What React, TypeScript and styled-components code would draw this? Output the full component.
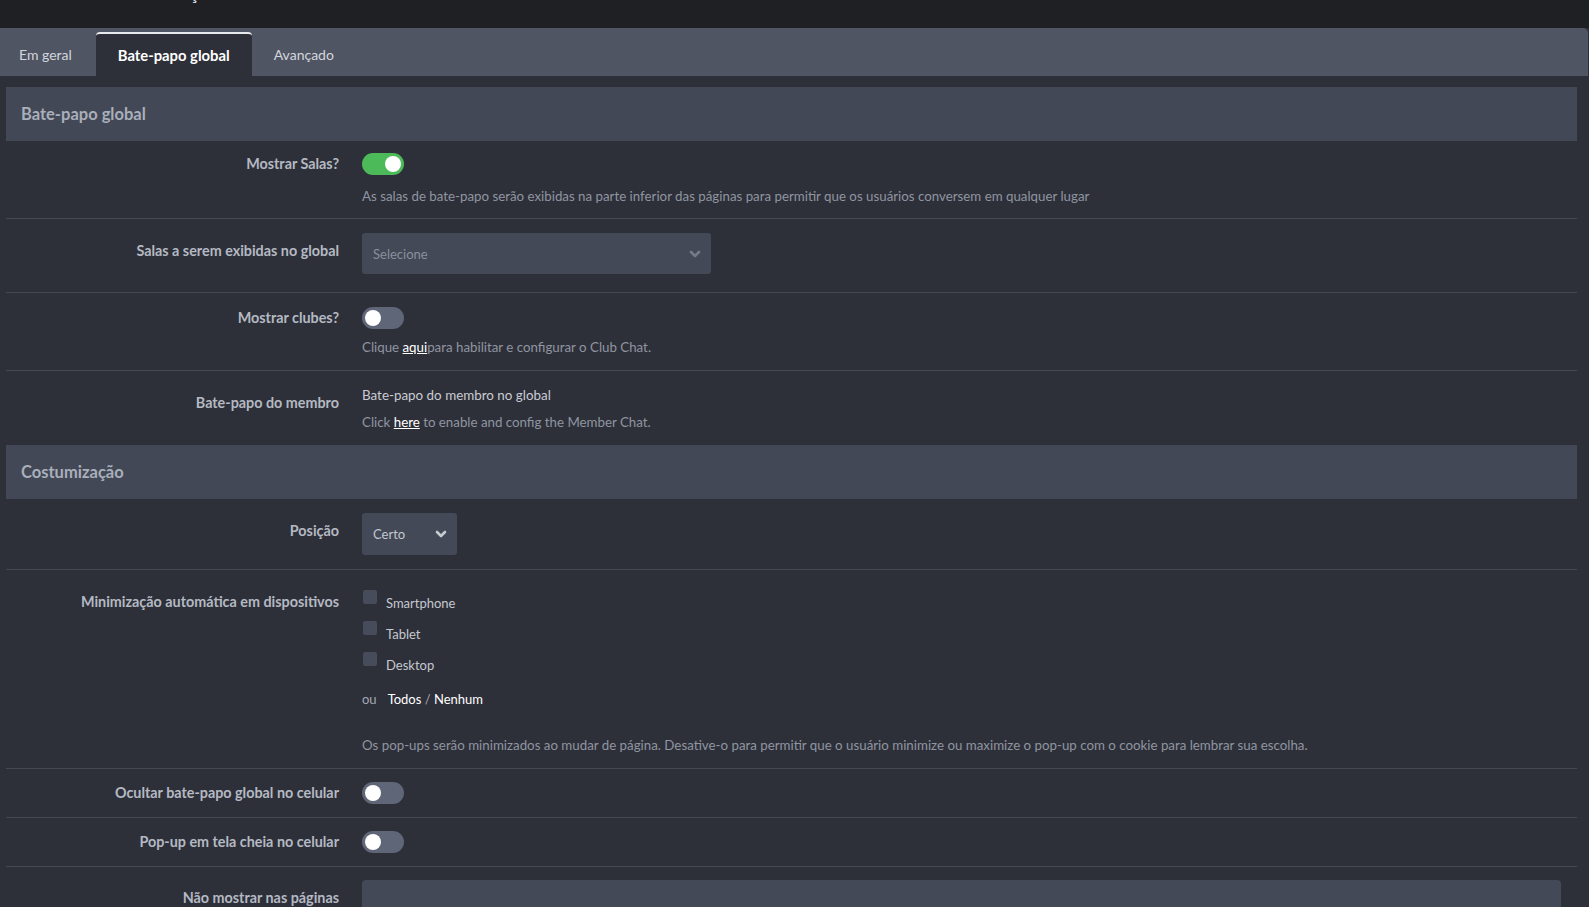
import React, { useState } from 'react';
import styled, { createGlobalStyle } from 'styled-components';

const GlobalStyle = createGlobalStyle`
  html, body {
    margin: 0;
    padding: 0;
    background: #2e3039;
  }
  body {
    font-family: Lato, "Noto Sans", "Liberation Sans", sans-serif;
    color: #c4c8d0;
    overflow: hidden;
  }
  * { box-sizing: border-box; }
`;

const Page = styled.div`
  min-height: 907px;
  background: #2e3039;
`;

const TopBar = styled.div`
  height: 28px;
  background: #1f2024;
  padding-left: 136px;
  overflow: hidden;
`;

const TopTitle = styled.h1`
  margin: -18px 0 0 0;
  font-size: 20px;
  line-height: 20px;
  font-weight: 400;
  color: #d9dce2;
`;

const TabBar = styled.div`
  height: 48px;
  width: calc(100% - 1px);
  background: #4f5563;
  border-radius: 0 5px 0 0;
  display: flex;
  align-items: flex-end;
`;

const Tab = styled.button<{ $active?: boolean }>`
  height: 44px;
  padding: 0 22px 1px;
  border: none;
  border-top: 2px solid ${({ $active }) => ($active ? '#e8e9ec' : 'transparent')};
  border-radius: ${({ $active }) => ($active ? '4px 4px 0 0' : '0')};
  background: ${({ $active }) => ($active ? '#2e3039' : 'transparent')};
  color: ${({ $active }) => ($active ? '#ffffff' : '#d3d6dc')};
  font-family: inherit;
  font-size: ${({ $active }) => ($active ? '14.8px' : '14px')};
  font-weight: ${({ $active }) => ($active ? 700 : 400)};
  cursor: pointer;

  &:first-child {
    padding: 0 24px 1px 19px;
  }
`;

const Content = styled.div`
  padding: 11px 12px 0 6px;
`;

const SectionHeader = styled.div`
  height: 54px;
  background: #424855;
  display: flex;
  align-items: center;
  padding-left: 15px;
  font-size: 16.5px;
  font-weight: 700;
  color: #a9afbb;
`;

const Row = styled.div<{ $pt?: number; $pb?: number; $last?: boolean }>`
  display: grid;
  grid-template-columns: 356px 1fr;
  padding: ${({ $pt = 14 }) => $pt}px 16px ${({ $pb = 13 }) => $pb}px 0;
  border-bottom: ${({ $last }) => ($last ? 'none' : '1px solid #434854')};
`;

const Label = styled.div<{ $pt?: number }>`
  text-align: right;
  padding: ${({ $pt = 8 }) => $pt}px 23px 0 0;
  font-size: 14.35px;
  line-height: 20px;
  font-weight: 700;
  color: #b4b9c3;
`;

const Control = styled.div`
  display: flex;
  flex-direction: column;
  align-items: flex-start;
  min-width: 0;
`;

const Help = styled.div<{ $mt?: number }>`
  margin-top: ${({ $mt = 9 }) => $mt}px;
  font-size: 13.3px;
  line-height: 20px;
  color: #8f95a1;
`;

const Plain = styled.div<{ $mt?: number }>`
  margin-top: ${({ $mt = 0 }) => $mt}px;
  font-size: 13.4px;
  line-height: 20px;
  color: #c9ccd3;
`;

const Link = styled.a`
  color: #ffffff;
  text-decoration: underline;
  cursor: pointer;
`;

const SwitchTrack = styled.button<{ $on: boolean }>`
  position: relative;
  width: 42px;
  height: 22px;
  border: none;
  border-radius: 11px;
  padding: 0;
  background: ${({ $on }) => ($on ? '#4dba59' : '#5f6677')};
  cursor: pointer;
`;

const SwitchKnob = styled.span<{ $on: boolean }>`
  position: absolute;
  top: 3px;
  left: ${({ $on }) => ($on ? '23px' : '3px')};
  width: 16px;
  height: 16px;
  border-radius: 50%;
  background: #ffffff;
`;

const Select = styled.div<{ $width: number; $height?: number; $light?: boolean }>`
  width: ${({ $width }) => $width}px;
  height: ${({ $height = 41 }) => $height}px;
  background: #434957;
  border-radius: 3px;
  display: flex;
  align-items: center;
  justify-content: space-between;
  padding: 0 10px 0 11px;
  font-size: 13px;
  color: ${({ $light }) => ($light ? '#c3c7cf' : '#8a909c')};

  svg {
    color: ${({ $light }) => ($light ? '#c7cbd2' : '#737a88')};
  }
`;

const CheckList = styled.div`
  display: flex;
  flex-direction: column;
  margin-top: 9px;
`;

const CheckItem = styled.label`
  display: flex;
  align-items: flex-start;
  gap: 9px;
  height: 31px;
  padding-left: 1px;
  font-size: 13px;
  line-height: 20px;
  color: #c4c8d0;
  cursor: pointer;
`;

const Box = styled.span`
  width: 14px;
  height: 14px;
  margin-top: -3px;
  border-radius: 2px;
  background: #464c5a;
`;

const OrLine = styled.div`
  display: flex;
  gap: 11px;
  font-size: 13px;
  line-height: 20px;
  margin-top: 3px;
  color: #a3a8b3;

  b {
    font-weight: 400;
    color: #ffffff;
  }
`;

const TextArea = styled.div`
  width: 100%;
  height: 80px;
  background: #434957;
  border-radius: 4px;
`;

const Chevron = () => (
  <svg width="12" height="12" viewBox="0 0 12 12" fill="none">
    <polyline points="2,4 6,8 10,4" stroke="currentColor" strokeWidth="2.6" strokeLinecap="round" strokeLinejoin="round" />
  </svg>
);

const Switch: React.FC<{ on: boolean; onToggle: () => void }> = ({ on, onToggle }) => (
  <SwitchTrack $on={on} onClick={onToggle}>
    <SwitchKnob $on={on} />
  </SwitchTrack>
);

export default function App() {
  const [tab, setTab] = useState(1);
  const [toggles, setToggles] = useState({
    salas: true,
    clubes: false,
    ocultar: false,
    fullscreen: false,
  });

  const flip = (key: keyof typeof toggles) =>
    setToggles({ ...toggles, [key]: !toggles[key] });

  const tabs = ['Em geral', 'Bate-papo global', 'Avançado'];

  return (
    <Page>
      <GlobalStyle />
      <TopBar>
        <TopTitle>Definições do Chat</TopTitle>
      </TopBar>

      <TabBar>
        {tabs.map((t, i) => (
          <Tab key={t} $active={tab === i} onClick={() => setTab(i)}>
            {t}
          </Tab>
        ))}
      </TabBar>

      <Content>
        <SectionHeader>Bate-papo global</SectionHeader>

        <Row $pt={12} $pb={12}>
          <Label $pt={1}>Mostrar Salas?</Label>
          <Control>
            <Switch on={toggles.salas} onToggle={() => flip('salas')} />
            <Help $mt={11}>
              As salas de bate-papo serão exibidas na parte inferior das páginas para permitir que os usuários conversem em qualquer lugar
            </Help>
          </Control>
        </Row>

        <Row $pt={14} $pb={18}>
          <Label>Salas a serem exibidas no global</Label>
          <Control>
            <Select $width={349}>
              Selecione
              <Chevron />
            </Select>
          </Control>
        </Row>

        <Row $pt={14} $pb={13}>
          <Label $pt={1}>Mostrar clubes?</Label>
          <Control>
            <Switch on={toggles.clubes} onToggle={() => flip('clubes')} />
            <Help $mt={8}>
              Clique <Link>aqui</Link>para habilitar e configurar o Club Chat.
            </Help>
          </Control>
        </Row>

        <Row $pt={14} $pb={13} $last>
          <Label>Bate-papo do membro</Label>
          <Control>
            <Plain>Bate-papo do membro no global</Plain>
            <Help $mt={7}>
              Click <Link>here</Link> to enable and config the Member Chat.
            </Help>
          </Control>
        </Row>

        <SectionHeader>Costumização</SectionHeader>

        <Row $pt={14} $pb={14}>
          <Label>Posição</Label>
          <Control>
            <Select $width={95} $height={42} $light>
              Certo
              <Chevron />
            </Select>
          </Control>
        </Row>

        <Row $pt={14} $pb={13}>
          <Label>Minimização automática em dispositivos</Label>
          <Control>
            <CheckList>
              <CheckItem>
                <Box />
                Smartphone
              </CheckItem>
              <CheckItem>
                <Box />
                Tablet
              </CheckItem>
              <CheckItem>
                <Box />
                Desktop
              </CheckItem>
            </CheckList>
            <OrLine>
              ou
              <span>
                <b>Todos</b> / <b>Nenhum</b>
              </span>
            </OrLine>
            <Help $mt={26}>
              Os pop-ups serão minimizados ao mudar de página. Desative-o para permitir que o usuário minimize ou maximize o pop-up com o cookie para lembrar sua escolha.
            </Help>
          </Control>
        </Row>

        <Row $pt={13} $pb={13}>
          <Label $pt={1}>Ocultar bate-papo global no celular</Label>
          <Control>
            <Switch on={toggles.ocultar} onToggle={() => flip('ocultar')} />
          </Control>
        </Row>

        <Row $pt={13} $pb={13}>
          <Label $pt={1}>Pop-up em tela cheia no celular</Label>
          <Control>
            <Switch on={toggles.fullscreen} onToggle={() => flip('fullscreen')} />
          </Control>
        </Row>

        <Row $pt={13} $pb={13} $last>
          <Label>Não mostrar nas páginas</Label>
          <Control>
            <TextArea />
          </Control>
        </Row>
      </Content>
    </Page>
  );
}
